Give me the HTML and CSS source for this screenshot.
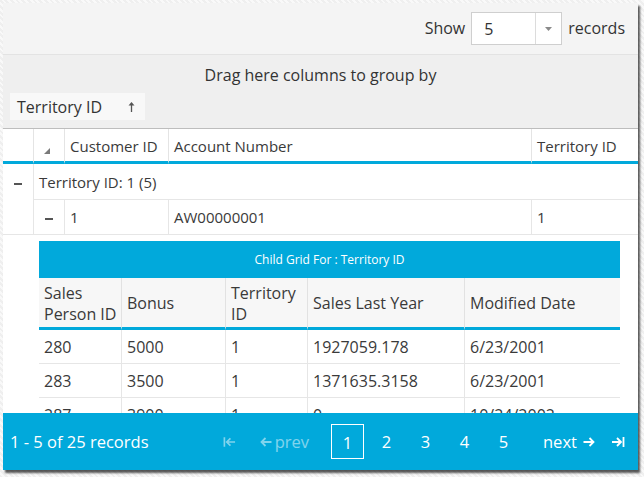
FILE: index.html
```html
<!DOCTYPE html>
<html>
<head>
<meta charset="utf-8">
<link rel="stylesheet" href="styles.css">
</head>
<body>
<div class="frame">
  <div class="toolbar">
    <span class="lbl">Show</span>
    <div class="select">
      <span class="val">5</span>
      <span class="btn"><svg width="7" height="4" viewBox="0 0 7 4"><polygon points="0,0 7,0 3.5,4" fill="#8a8a8a"/></svg></span>
    </div>
    <span class="lbl">records</span>
  </div>
  <div class="groupdrop">
    <div class="hint">Drag here columns to group by</div>
    <div class="chips">
      <div class="chip">Territory ID
        <svg class="chip-arrow" width="7" height="10" viewBox="0 0 7 10"><path d="M3.5 10V2" stroke="#555" stroke-width="1.3"/><polygon points="3.5,0 6.5,3.6 0.5,3.6" fill="#555"/></svg>
      </div>
    </div>
  </div>
  <div class="gridbody">
    <table class="grid">
      <colgroup><col class="c0"><col class="c1"><col class="c2"><col class="c3"><col class="c4"></colgroup>
      <thead>
        <tr>
          <th></th>
          <th class="tri-cell"><svg width="6" height="6" viewBox="0 0 6 6"><polygon points="6,0 6,6 0,6" fill="#7a7a7a"/></svg></th>
          <th>Customer ID</th>
          <th>Account Number</th>
          <th>Territory ID</th>
        </tr>
      </thead>
      <tbody>
        <tr class="group-row">
          <td class="indent"><span class="minus"></span></td>
          <td colspan="4" class="caption">Territory ID: 1 (5)</td>
        </tr>
        <tr class="data-row">
          <td class="indent blank"></td>
          <td class="indent"><span class="minus"></span></td>
          <td>1</td>
          <td>AW00000001</td>
          <td>1</td>
        </tr>
        <tr class="detail-row">
          <td colspan="5" class="detail">
            <div class="child">
              <div class="child-title">Child Grid For : Territory ID</div>
              <table class="cgrid">
                <colgroup><col class="d0"><col class="d1"><col class="d2"><col class="d3"><col class="d4"></colgroup>
                <thead>
                  <tr>
                    <th>Sales<br>Person ID</th>
                    <th>Bonus</th>
                    <th>Territory<br>ID</th>
                    <th>Sales Last Year</th>
                    <th>Modified Date</th>
                  </tr>
                </thead>
                <tbody>
                  <tr><td>280</td><td>5000</td><td>1</td><td>1927059.178</td><td>6/23/2001</td></tr>
                  <tr><td>283</td><td>3500</td><td>1</td><td>1371635.3158</td><td>6/23/2001</td></tr>
                  <tr><td>287</td><td>3900</td><td>1</td><td>0</td><td>10/24/2002</td></tr>
                </tbody>
              </table>
            </div>
          </td>
        </tr>
      </tbody>
    </table>
  </div>
  <div class="pager">
    <div class="info">1 - 5 of 25 records</div>
    <div class="nav">
      <span class="ico first dim"><svg width="14" height="14" viewBox="0 0 14 14"><path d="M1.5 2v10M13 7H4.5M8 3L4 7l4 4" stroke="#fff" stroke-width="1.8" fill="none"/></svg></span>
      <span class="prev dim"><svg width="13" height="14" viewBox="0 0 13 14"><path d="M12.5 7H2.5M6.5 3L2.5 7l4 4" stroke="#fff" stroke-width="1.8" fill="none"/></svg>prev</span>
      <span class="pages">
        <span class="page cur">1</span>
        <span class="page">2</span>
        <span class="page">3</span>
        <span class="page">4</span>
        <span class="page">5</span>
      </span>
      <span class="next">next<svg width="13" height="14" viewBox="0 0 13 14"><path d="M0.5 7h10M6.5 3l4 4-4 4" stroke="#fff" stroke-width="1.8" fill="none"/></svg></span>
      <span class="ico last"><svg width="14" height="14" viewBox="0 0 14 14"><path d="M1 7h8.5M6 3l4 4-4 4M12.5 2v10" stroke="#fff" stroke-width="1.8" fill="none"/></svg></span>
    </div>
  </div>
</div>
</body>
</html>
```

FILE: styles.css
```css
html, body {
  margin: 0;
  padding: 0;
}
body {
  width: 644px;
  height: 477px;
  background: repeating-linear-gradient(45deg, #efefef 0 2px, #f9f9f9 2px 4px);
  font-family: "Open Sans", "Noto Sans", sans-serif;
  font-size: 15px;
  color: #3a3a3a;
  padding-top: 3px;
  padding-left: 3px;
  box-sizing: border-box;
}
.frame {
  width: 635px;
  height: 467px;
  background: #fff;
  box-shadow: 2px 3px 2px rgba(0, 0, 0, 0.65);
  display: flex;
  flex-direction: column;
  overflow: hidden;
}

/* toolbar */
.toolbar {
  height: 49px;
  flex: none;
  background: #f4f4f4;
  border-bottom: 1px solid #e3e3e3;
  display: flex;
  align-items: center;
  justify-content: flex-end;
  padding-right: 13px;
  padding-bottom: 2px;
  gap: 6px;
}
.toolbar .lbl {
  font-size: 16px;
  color: #333;
}
.select {
  width: 89px;
  height: 31px;
  border: 1px solid #cfcfcf;
  background: #fff;
  display: flex;
  margin-top: 2px;
}
.select .val {
  flex: 1;
  padding-left: 12px;
  font-size: 16px;
  line-height: 33px;
  color: #333;
  border-right: 1px solid #dcdcdc;
}
.select .btn {
  width: 25px;
  display: flex;
  align-items: center;
  justify-content: center;
}

/* group drop area */
.groupdrop {
  height: 73px;
  flex: none;
  background: #efefef;
  border-bottom: 1px solid #bdbdbd;
  display: flex;
  flex-direction: column;
}
.hint {
  text-align: center;
  font-size: 16px;
  line-height: 20px;
  padding-top: 10px;
  color: #333;
}
.chips {
  padding: 8px 0 0 7px;
  display: flex;
}
.chip {
  width: 128px;
  height: 27px;
  background: #f8f8f8;
  padding-left: 7px;
  display: flex;
  align-items: center;
  justify-content: space-between;
  font-size: 16px;
  color: #333;
}
.chip-arrow {
  margin-right: 10px;
}

/* main grid */
.gridbody {
  flex: 1;
  overflow: hidden;
  background: #fff;
}
.grid {
  width: 635px;
  border-collapse: separate;
  border-spacing: 0;
  table-layout: fixed;
}
.c0 { width: 31px; }
.c1 { width: 31px; }
.c2 { width: 104px; }
.c3 { width: 363px; }
.c4 { width: 106px; }
.grid th {
  height: 27px;
  padding: 2px 0 0 5px;
  text-align: left;
  font-weight: normal;
  line-height: 20px;
  color: #3a3a3a;
  border-bottom: 3px solid #01a9db;
  border-right: 1px solid #e4e4e4;
  white-space: nowrap;
  overflow: hidden;
}
.grid th:last-child { border-right: none; }
.grid th.tri-cell {
  padding: 5px 0 0 10px;
}
.grid td {
  padding: 0 0 0 5px;
  line-height: 20px;
  white-space: nowrap;
}
.group-row td {
  height: 34px;
  border-bottom: 1px solid #e6e6e6;
}
.group-row td.indent {
  border-right: 1px solid #e6e6e6;
  border-bottom: none;
  padding-left: 11px;
}
.group-row td.caption {
  padding-left: 5px;
  padding-top: 1px;
}
.data-row td {
  height: 34px;
  border-right: 1px solid #e6e6e6;
  border-bottom: 1px solid #e6e6e6;
}
.data-row td:last-child { border-right: none; }
.data-row td.indent {
  padding-left: 11px;
}
.data-row td.blank {
  border-right: 1px solid #e6e6e6;
}
.minus {
  display: inline-block;
  width: 8px;
  height: 2px;
  background: #555;
  vertical-align: middle;
}
.grid td.detail {
  padding: 6px 18px 0 36px;
}

/* child grid */
.child-title {
  height: 37px;
  background: #01a9db;
  color: #fff;
  font-size: 12px;
  text-align: center;
  line-height: 37px;
}
.cgrid {
  width: 581px;
  border-collapse: separate;
  border-spacing: 0;
  table-layout: fixed;
}
.d0 { width: 83px; }
.d1 { width: 104px; }
.d2 { width: 82px; }
.d3 { width: 157px; }
.d4 { width: 155px; }
.cgrid th {
  height: 47px;
  background: #f7f7f7;
  text-align: left;
  font-weight: normal;
  font-size: 16px;
  line-height: 21px;
  color: #3a3a3a;
  padding: 2px 0 0 5px;
  border-bottom: 3px solid #01a9db;
  border-right: 1px solid #e2e2e2;
}
.cgrid th:last-child { border-right: none; }
.cgrid td {
  height: 33px;
  padding: 0 0 0 5px;
  font-size: 16px;
  line-height: 20px;
  color: #3a3a3a;
  border-right: 1px solid #e6e6e6;
  border-bottom: 1px solid #e6e6e6;
  white-space: nowrap;
}
.cgrid td:last-child { border-right: none; }

/* pager */
.pager {
  height: 57px;
  flex: none;
  background: #01a9db;
  color: #fff;
  font-size: 16.5px;
  display: flex;
  align-items: center;
  padding-left: 7px;
}
.nav {
  margin-left: auto;
  padding-right: 13px;
  display: flex;
  align-items: center;
}
.dim { opacity: 0.5; }
.ico {
  display: flex;
  align-items: center;
}
.first { width: 13px; margin-right: 23px; }
.last { width: 14px; }
.prev, .next {
  display: flex;
  align-items: center;
}
.prev { width: 50px; margin-right: 22px; justify-content: space-between; }
.next { width: 58px; margin-right: 10px; gap: 6px; }
.pages {
  display: flex;
  gap: 6px;
  margin-right: 23px;
}
.page {
  width: 33px;
  height: 35px;
  box-sizing: border-box;
  display: flex;
  align-items: center;
  justify-content: center;
}
.page.cur {
  border: 1px solid #fff;
  padding-top: 2px;
}
```
